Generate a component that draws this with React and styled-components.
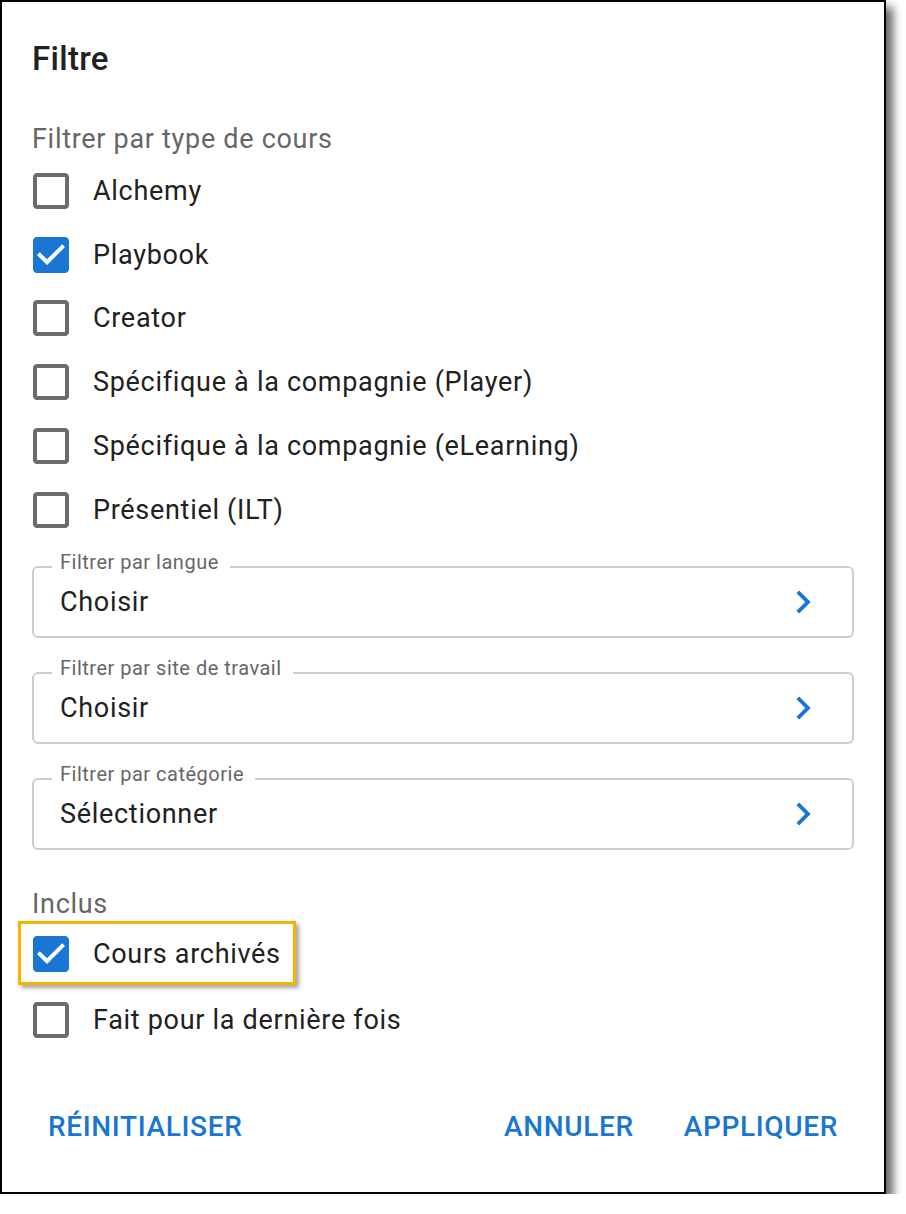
import React from 'react';
import styled, { createGlobalStyle, css } from 'styled-components';

const GlobalStyle = createGlobalStyle`
  html, body {
    margin: 0;
    padding: 0;
    background: #fff;
  }
  body {
    font-family: Roboto, 'Liberation Sans', Arial, sans-serif;
    color: rgba(0, 0, 0, 0.87);
  }
`;

const Frame = styled.div`
  width: 886px;
  box-sizing: border-box;
  border: 2px solid #000;
  background: #fff;
  box-shadow: 7px 7px 9px rgba(0, 0, 0, 0.6);
`;

const Content = styled.div`
  padding: 33px 30px 0;
`;

const Title = styled.h2`
  margin: 0;
  font-size: 33px;
  font-weight: 500;
  line-height: 48px;
  letter-spacing: 0.3px;
  color: #212121;
`;

const SectionLabel = styled.div`
  margin-top: ${(p) => p.$top || 36}px;
  font-size: 27px;
  line-height: 40px;
  letter-spacing: 0.7px;
  color: #666;
`;

const Row = styled.label`
  display: flex;
  align-items: center;
  height: 63.8px;
  box-sizing: border-box;
  font-size: 27px;
  letter-spacing: 0.7px;
  color: #212121;

  ${(p) =>
    p.$highlight &&
    css`
      width: fit-content;
      margin: -3px 0 3px -14px;
      padding: 2px 12px 0 11px;
      border: 3px solid #f5b400;
      box-shadow: 3px 3px 4px rgba(0, 0, 0, 0.35);
    `}
`;

const Box = styled.svg`
  width: 36px;
  height: 36px;
  margin-left: 1px;
  margin-right: 24px;
  flex-shrink: 0;
`;

const Checkbox = ({ checked }) => (
  <Box viewBox="3 3 18 18">
    {checked ? (
      <path
        fill="#1976d2"
        d="M19 3H5c-1.11 0-2 .9-2 2v14c0 1.1.89 2 2 2h14c1.11 0 2-.9 2-2V5c0-1.1-.89-2-2-2zm-9 14l-5-5 1.41-1.41L10 14.17l7.59-7.59L19 8l-9 9z"
      />
    ) : (
      <path
        fill="#6b6b6b"
        d="M19 5v14H5V5h14m0-2H5c-1.1 0-2 .9-2 2v14c0 1.1.9 2 2 2h14c1.1 0 2-.9 2-2V5c0-1.1-.9-2-2-2z"
      />
    )}
  </Box>
);

const Fields = styled.div`
  display: flex;
  flex-direction: column;
  gap: 34px;
  margin-top: 24.4px;
`;

const Field = styled.div`
  position: relative;
  display: flex;
  align-items: center;
  justify-content: space-between;
  height: 72px;
  box-sizing: border-box;
  border: 2px solid #cdcdcd;
  border-radius: 6px;
  padding: 0 26px;
  font-size: 27px;
  letter-spacing: 0.7px;
  color: #212121;
`;

const FieldLabel = styled.span`
  position: absolute;
  top: -16px;
  left: 18px;
  padding: 0 11px 0 8px;
  background: #fff;
  font-size: 20px;
  line-height: 20px;
  letter-spacing: 0.5px;
  color: #666;
`;

const Chevron = styled.svg`
  width: 46px;
  height: 46px;
  flex-shrink: 0;
`;

const Footer = styled.div`
  display: flex;
  justify-content: space-between;
  align-items: center;
  padding: 55px 33px 45px;
`;

const Group = styled.div`
  display: flex;
  gap: 24px;
`;

const TextButton = styled.button`
  border: 0;
  background: none;
  padding: 0 13px;
  height: 40px;
  font-family: Roboto, 'Liberation Sans', Arial, sans-serif;
  font-size: 28px;
  font-weight: 500;
  letter-spacing: 0.65px;
  text-transform: uppercase;
  color: #1976d2;
  cursor: pointer;
`;

const courseTypes = [
  { label: 'Alchemy', checked: false },
  { label: 'Playbook', checked: true },
  { label: 'Creator', checked: false },
  { label: 'Spécifique à la compagnie (Player)', checked: false },
  { label: 'Spécifique à la compagnie (eLearning)', checked: false },
  { label: 'Présentiel (ILT)', checked: false },
];

const selects = [
  { label: 'Filtrer par langue', value: 'Choisir' },
  { label: 'Filtrer par site de travail', value: 'Choisir' },
  { label: 'Filtrer par catégorie', value: 'Sélectionner' },
];

const App = () => (
  <>
    <GlobalStyle />
    <Frame>
      <Content>
        <Title>Filtre</Title>
        <SectionLabel>Filtrer par type de cours</SectionLabel>
        {courseTypes.map((t) => (
          <Row key={t.label}>
            <Checkbox checked={t.checked} />
            {t.label}
          </Row>
        ))}

        <Fields>
          {selects.map((s) => (
            <Field key={s.label}>
              <FieldLabel>{s.label}</FieldLabel>
              {s.value}
              <Chevron viewBox="0 0 24 24">
                <path fill="#1976d2" d="M10 6 8.59 7.41 13.17 12l-4.58 4.59L10 18l6-6z" />
              </Chevron>
            </Field>
          ))}
        </Fields>

        <SectionLabel $top={34}>Inclus</SectionLabel>
        <Row $highlight>
          <Checkbox checked />
          Cours archivés
        </Row>
        <Row>
          <Checkbox />
          Fait pour la dernière fois
        </Row>
      </Content>

      <Footer>
        <TextButton>Réinitialiser</TextButton>
        <Group>
          <TextButton>Annuler</TextButton>
          <TextButton>Appliquer</TextButton>
        </Group>
      </Footer>
    </Frame>
  </>
);

export default App;
